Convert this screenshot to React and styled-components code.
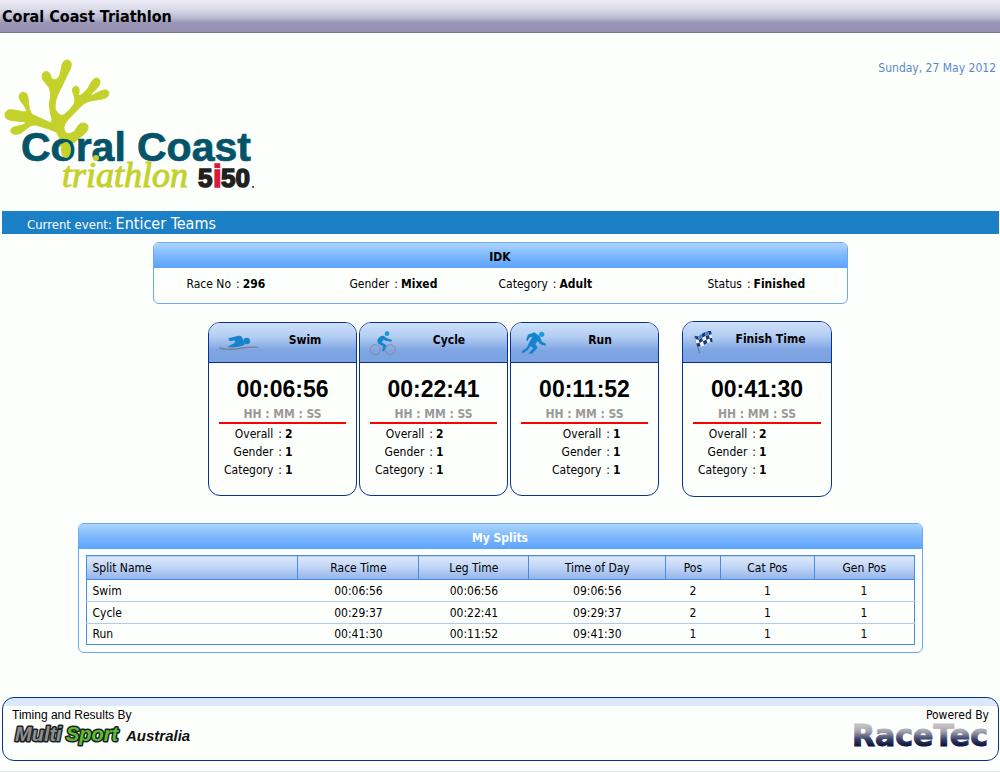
import React from "react";
import styled, { createGlobalStyle } from "styled-components";

const GlobalStyle = createGlobalStyle`
  * { box-sizing: border-box; }
  body {
    margin: 0;
    background: #fdfffd;
    color: #000;
    font: 12px/16px "DejaVu Sans Condensed", "DejaVu Sans", Tahoma, sans-serif;
    font-stretch: condensed;
  }
  h1, h2, p, dl, dd { margin: 0; }
  svg { overflow: visible; font-stretch: normal; }
`;

const TitleBar = styled.header`
  height: 33px;
  padding: 1px 2px 0;
  display: flex;
  align-items: center;
  border-bottom: 1px solid #77749a;
  background: linear-gradient(#eeecf6 0%, #d9dae8 30%, #b6b7cd 58%, #9a96b6 70%, #9791b4 100%);
`;

const PageTitle = styled.h1`
  font-size: 16px;
  line-height: 20px;
  font-weight: bold;
`;

const Masthead = styled.section`
  display: flex;
  justify-content: space-between;
  align-items: flex-start;
  padding: 27px 4px 19px 4px;
`;

const EventDate = styled.time`
  color: #5b87cc;
`;

const EventBar = styled.p`
  height: 23px;
  margin: 0 1px 0 2px;
  padding: 2px 25px 0;
  background: #1b80c5;
  color: #fff;
  font-size: 13px;
  line-height: 21px;
`;

const EventName = styled.span`
  font-size: 16px;
`;

const Panel = styled.section`
  width: ${(p) => p.$width};
  margin: ${(p) => p.$top}px auto 0;
  border: 1px solid #68aaf8;
  border-radius: 6px;
  overflow: hidden;
`;

const PanelTitle = styled.h2`
  height: 25px;
  padding-top: 1px;
  text-align: center;
  font-size: 12px;
  line-height: 26px;
  color: ${(p) => p.$color};
  background: linear-gradient(#add5fc, #7db8fc 50%, #5ca4fd);
`;

const Details = styled.dl`
  display: grid;
  grid-template-columns: 163fr 149fr 209fr 139fr;
  height: 35px;
  padding-left: 33px;
  line-height: 32px;
`;

const Detail = styled.div`
  display: flex;
  gap: 3px;
  white-space: nowrap;
`;

const Colon = styled.span`
  margin-left: 5px;
`;

const Value = styled.dd`
  font-weight: bold;
`;

const Cards = styled.section`
  display: flex;
  justify-content: center;
  align-items: center;
  gap: 2px;
  margin: 17px 0 26px;
  padding-left: 40px;
`;

const Card = styled.article`
  width: ${(p) => (p.$final ? 150 : 149)}px;
  margin-left: ${(p) => (p.$final ? 21 : 0)}px;
  padding-bottom: ${(p) => (p.$final ? 17 : 16)}px;
  border: 1px solid #0a3191;
  border-radius: 12px;
  overflow: hidden;
`;

const CardHead = styled.header`
  display: flex;
  height: ${(p) => (p.$final ? 41 : 40)}px;
  padding: 6px 5px 0 10px;
  border-bottom: 1px solid #0a3191;
  background: linear-gradient(#cde0fa, #b3cdf3 35%, #7fa5e3 70%, #7ba2e1);
`;

const CardTitle = styled.h2`
  flex: 1;
  text-align: center;
  font-size: 12px;
  line-height: 22px;
`;

const LegTime = styled.p`
  padding-top: 13px;
  text-align: center;
  font: bold 23px/26px "Liberation Sans", Arial, sans-serif;
`;

const Units = styled.p`
  margin: 4px 10px 1px;
  height: 18px;
  border-bottom: 2px solid #f00;
  text-align: center;
  font-weight: bold;
  color: #999;
`;

const Ranks = styled.dl`
  line-height: 18px;
`;

const Rank = styled.div`
  display: grid;
  grid-template-columns: ${(p) => p.$labels}px auto;
  column-gap: 3px;
  dt { text-align: right; }
`;

const TableWrap = styled.div`
  padding: 6px 7px 7px;
`;

const Table = styled.table`
  width: 100%;
  table-layout: fixed;
  border-collapse: collapse;
  border: 1px solid #438ee0;
  th, td {
    padding: 0;
    text-align: center;
  }
  th {
    height: 24px;
    font-weight: normal;
    border: 1px solid #438ee0;
    background: linear-gradient(#dfe9fa, #bdd3f5 50%, #92b2ea);
  }
  td {
    height: 22px;
    border-bottom: 1px solid #aecbee;
  }
  tr:last-child td {
    height: 21px;
    border-bottom-color: #438ee0;
  }
  th:first-child, td:first-child {
    padding-left: 6px;
    text-align: left;
  }
`;

const Col = styled.col`
  width: ${(p) => p.$share}%;
`;

const Footer = styled.footer`
  display: flex;
  justify-content: space-between;
  height: 64px;
  margin: 44px 1px 10px 2px;
  padding: 9px 9px 0;
  border: 1px solid #0a3191;
  border-radius: 12px;
  background: linear-gradient(#d9e8fa 8px, transparent 8px);
`;

const Credit = styled.div`
  display: flex;
  flex-direction: column;
  align-items: ${(p) => p.$align};
  svg { display: block; }
`;

const TimingLabel = styled.p`
  font-family: "Liberation Sans", Arial, sans-serif;
`;

const BottomRule = styled.hr`
  margin: 0;
  border: 0;
  border-top: 1px solid #dde0e4;
`;

function CoralLogo() {
  return (
    <svg width="252" height="132" viewBox="4 60 252 132" role="img" aria-label="Coral Coast Triathlon 5i50">
      <g transform="scale(.3333)" fill="#c4d12b" stroke="#c4d12b" strokeWidth="3">
        <path d="M176 440Q186 420 170 397Q158 390 110 376C92 371 82 386 62 400C45 407 29 401 33 389C38 375 66 382 80 367C60 362 40 365 23 358C11 352 14 334 25 330C47 326 64 339 80 335C80 320 57 305 57 288C61 273 79 273 83 288C87 305 84 332 98 344L150 368Q158 367 156 357C151 339 149 327 148 310Q155 283 148 264C137 246 121 239 128 221C136 210 149 214 152 227C155 243 168 243 177 230C188 214 178 183 202 180C220 182 214 205 205 218L182 267C170 289 163 309 166 329Q180 353 194 343Q217 325 223 309C229 288 213 278 219 264C228 253 240 260 237 277C233 291 242 289 252 277C269 267 271 239 288 234C307 235 301 256 289 267C280 275 271 284 274 287C285 283 303 268 320 270C332 277 326 291 314 295C291 303 266 297 246 316L205 358Q188 376 193 391Q200 408 219 397C231 391 229 377 243 370C262 366 270 379 260 394C252 407 233 414 226 426Z" />
      </g>
      <g fontFamily="Liberation Sans, Arial, sans-serif" fontWeight="bold">
        <g fontSize="41" fill="#045469" stroke="#045469" strokeWidth=".7">
          <text x="21" y="161">Coral</text>
          <text x="137" y="161">Coast</text>
        </g>
        <g fill="#c4d12b">
          <ellipse cx="66" cy="150" rx="5" ry="8" />
          <circle cx="96" cy="158" r="3" />
        </g>
        <g fontSize="26" fill="#221f20" stroke="#221f20" strokeWidth="1.5">
          <text x="198" y="187">5</text>
          <text x="213" y="187" fill="#d9183b" stroke="#d9183b" fontSize="31">i</text>
          <text x="221" y="187">50</text>
          <circle cx="253" cy="187" r="1" strokeWidth="0" />
        </g>
      </g>
      <text x="62" y="187" fontFamily="Liberation Serif, Times New Roman, serif" fontStyle="italic" fontSize="36" fill="#c4d12b" stroke="#c4d12b" strokeWidth="1">triathlon</text>
    </svg>
  );
}

function SwimIcon() {
  return (
    <svg width="40" height="28" viewBox="60 42 120 84" aria-hidden="true">
      <path d="M88 70L119 62Q127 61 130 68L137 90Q112 100 85 96L108 83L107 76L92 79Z" fill="#1982c8" />
      <circle cx="143" cy="78" r="10" fill="#1982c8" />
      <path d="M60 99Q82 105 111 102Q145 95 178 97" fill="none" stroke="#7d7f88" strokeWidth="4" />
    </svg>
  );
}

function CycleIcon() {
  return (
    <svg width="26" height="28" viewBox="511 42 78 84" aria-hidden="true">
      <g fill="none" stroke="#858992" strokeWidth="3">
        <circle cx="527" cy="104" r="15" />
        <circle cx="572" cy="104" r="15" />
      </g>
      <circle cx="562" cy="56" r="7" fill="#149ae2" />
      <path d="M533 76Q537 62 552 62L562 70L576 74V80L560 78L552 74L546 82L560 91L553 109H547L550 94L536 86Q532 82 533 76Z" fill="#1685cd" />
    </svg>
  );
}

function RunIcon() {
  return (
    <svg width="26" height="28" viewBox="62 42 78 84" aria-hidden="true">
      <circle cx="124" cy="58" r="8" fill="#12a0e4" />
      <path d="M83 59L102 52L118 64L125 80L137 86L135 92L119 88L113 78L105 87L112 98L95 116H84L99 99L90 94L82 105L66 116L65 109L79 98L89 78L97 65L87 68L82 78L77 75Z" fill="#1583cb" />
    </svg>
  );
}

function FlagIcon() {
  return (
    <svg width="22" height="28" viewBox="80 39 66 84" aria-hidden="true">
      <path d="M84 62L100 115" stroke="#5b6e9d" strokeWidth="3" />
      <path d="M84 62Q96 66 106 57T133 48L139 81Q126 80 118 88T93 96Z" fill="#eef5ff" />
      <path d="M85 63l10 1 3 10-10-1zM106 57l9-6 3 11-10 6zM125 48l9 0 2 10-8 2zM97 74l10-6 3 10-10 6zM118 62l10-2 2 11-10 3zM90 85l10-1 3 10-10 2zM110 79l10-5 3 10-10 6zM130 70l7-1 2 12-7 0z" fill="#1b396f" />
      <path d="M95 64l11-7 2 10-10 6zM116 52l9-4 2 11-9 3z" fill="#417ed1" />
    </svg>
  );
}

function MultiSportLogo() {
  return (
    <svg width="182" height="24" viewBox="11 723 182 24" role="img" aria-label="MultiSport Australia">
      <g fontFamily="Liberation Sans, Arial, sans-serif" fontWeight="bold" fontStyle="italic">
        <g fontSize="20" strokeWidth="3" paintOrder="stroke" stroke="#1d211d" strokeLinejoin="round">
          <text x="14" y="741" fill="#8b8f92">Multi</text>
          <text x="65" y="741" fill="#59bd32">Sport</text>
        </g>
        <text x="125" y="741" fontSize="15" fill="#111">Australia</text>
      </g>
    </svg>
  );
}

function RaceTecLogo() {
  return (
    <svg width="140" height="26" viewBox="850 723 140 26" role="img" aria-label="RaceTec">
      <defs>
        <linearGradient id="chrome" gradientUnits="userSpaceOnUse" x1="0" y1="725" x2="0" y2="746">
          <stop offset="0" stopColor="#c6c2c3" />
          <stop offset=".3" stopColor="#a5a4b1" />
          <stop offset=".7" stopColor="#343c68" />
          <stop offset="1" stopColor="#0b123a" />
        </linearGradient>
      </defs>
      <text x="989" y="746" textAnchor="end" fontFamily="DejaVu Sans, sans-serif" fontWeight="bold" fontSize="30" fill="url(#chrome)" stroke="url(#chrome)" strokeWidth="1">RaceTec</text>
    </svg>
  );
}

const details = [["Race No", "296"], ["Gender", "Mixed"], ["Category", "Adult"], ["Status", "Finished"]];

const legs = [
  { name: "Swim", Icon: SwimIcon, time: "00:06:56", ranks: [2, 1, 1], labels: 73 },
  { name: "Cycle", Icon: CycleIcon, time: "00:22:41", ranks: [2, 1, 1], labels: 73 },
  { name: "Run", Icon: RunIcon, time: "00:11:52", ranks: [1, 1, 1], labels: 99 },
  { name: "Finish Time", Icon: FlagIcon, time: "00:41:30", ranks: [2, 1, 1], labels: 73, final: true },
];

const columns = [
  ["Split Name", 25.6], ["Race Time", 14.6], ["Leg Time", 13.3], ["Time of Day", 16.5],
  ["Pos", 6.6], ["Cat Pos", 11.4], ["Gen Pos", 12],
];

const splits = [
  ["Swim", "00:06:56", "00:06:56", "09:06:56", 2, 1, 1],
  ["Cycle", "00:29:37", "00:22:41", "09:29:37", 2, 1, 1],
  ["Run", "00:41:30", "00:11:52", "09:41:30", 1, 1, 1],
];

function LegCard({ name, Icon, time, ranks, labels, final }) {
  return (
    <Card $final={final}>
      <CardHead $final={final}>
        <Icon />
        <CardTitle>{name}</CardTitle>
      </CardHead>
      <LegTime>{time}</LegTime>
      <Units>HH : MM : SS</Units>
      <Ranks>
        {["Overall", "Gender", "Category"].map((label, i) => (
          <Rank key={label} $labels={labels}>
            <dt>{label}<Colon>:</Colon></dt>
            <Value>{ranks[i]}</Value>
          </Rank>
        ))}
      </Ranks>
    </Card>
  );
}

export default function App() {
  return (
    <>
      <GlobalStyle />
      <TitleBar>
        <PageTitle>Coral Coast Triathlon</PageTitle>
      </TitleBar>
      <main>
        <Masthead>
          <CoralLogo />
          <EventDate dateTime="2012-05-27">Sunday, 27 May 2012</EventDate>
        </Masthead>
        <EventBar>
          Current event: <EventName>Enticer Teams</EventName>
        </EventBar>
        <Panel $width="69.5%" $top={8}>
          <PanelTitle $color="#000">IDK</PanelTitle>
          <Details>
            {details.map(([label, value]) => (
              <Detail key={label}>
                <dt>{label}<Colon>:</Colon></dt>
                <Value>{value}</Value>
              </Detail>
            ))}
          </Details>
        </Panel>
        <Cards>
          {legs.map((leg) => <LegCard key={leg.name} {...leg} />)}
        </Cards>
        <Panel $width="84.5%" $top={0}>
          <PanelTitle $color="#fff">My Splits</PanelTitle>
          <TableWrap>
            <Table>
              <colgroup>
                {columns.map(([name, share]) => <Col key={name} $share={share} />)}
              </colgroup>
              <thead>
                <tr>{columns.map(([name]) => <th key={name} scope="col">{name}</th>)}</tr>
              </thead>
              <tbody>
                {splits.map((row) => (
                  <tr key={row[0]}>{row.map((cell, i) => <td key={i}>{cell}</td>)}</tr>
                ))}
              </tbody>
            </Table>
          </TableWrap>
        </Panel>
      </main>
      <Footer>
        <Credit $align="flex-start">
          <TimingLabel>Timing and Results By</TimingLabel>
          <MultiSportLogo />
        </Credit>
        <Credit $align="flex-end">
          <p>Powered By</p>
          <RaceTecLogo />
        </Credit>
      </Footer>
      <BottomRule />
    </>
  );
}
